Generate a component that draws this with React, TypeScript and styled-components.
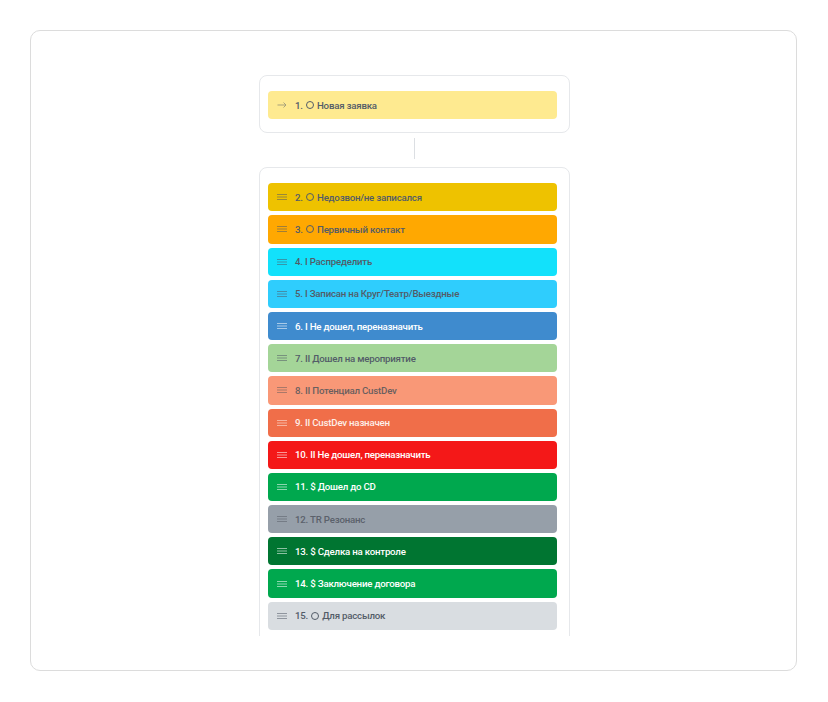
import React from 'react';
import styled, { createGlobalStyle } from 'styled-components';

const GlobalStyle = createGlobalStyle`
  html, body {
    margin: 0;
    padding: 0;
    background: #ffffff;
  }
  body {
    font-family: Roboto, 'Noto Sans', 'DejaVu Sans', sans-serif;
  }
`;

const Page = styled.div`
  box-sizing: border-box;
  width: 100%;
  height: 702px;
  padding: 30px 31px 31px 30px;
`;

const Card = styled.div`
  box-sizing: border-box;
  height: 100%;
  display: flex;
  flex-direction: column;
  padding: 44px 0 34px 0;
  border: 1px solid #dcdcdc;
  border-radius: 10px;
  background: #fff;
`;

const Viewport = styled.div`
  flex: 1;
  overflow: hidden;
  display: flex;
  flex-direction: column;
  align-items: center;
  padding-left: 2px;
`;

const Panel = styled.div`
  box-sizing: border-box;
  width: 311px;
  padding: 15px 12px 13px 8px;
  border: 1px solid #e6e8eb;
  border-radius: 8px;
  background: #fff;
  display: flex;
  flex-direction: column;
  gap: 4px;
  flex-shrink: 0;
`;

const Connector = styled.div`
  width: 1px;
  height: 21px;
  margin: 5px 0 8px;
  background: #dcdfe3;
  flex-shrink: 0;
`;

const Row = styled.div<{ $bg: string; $fg: string }>`
  display: flex;
  align-items: center;
  gap: 8px;
  height: 28.2px;
  padding: 0 9px;
  border-radius: 4px;
  background: ${(p) => p.$bg};
  color: ${(p) => p.$fg};
  font-size: 9.7px;
  font-weight: 500;
  letter-spacing: -0.22px;
  white-space: nowrap;
  flex-shrink: 0;
`;

const Icon = styled.svg`
  width: 10px;
  height: 10px;
  flex-shrink: 0;
  opacity: 0.55;
`;

const Circle = styled.span`
  display: inline-block;
  width: 6px;
  height: 6px;
  border: 1px solid currentColor;
  border-radius: 50%;
  margin: 0 3px 0 1px;
  vertical-align: -0.5px;
`;

const Handle = () => (
  <Icon viewBox="0 0 10 10">
    <path d="M0 2.5h10M0 5h10M0 7.5h10" stroke="currentColor" strokeWidth="1" />
  </Icon>
);

const Arrow = () => (
  <Icon viewBox="0 0 10 10">
    <path d="M0.5 5h8.5M6.5 2.5 9 5 6.5 7.5" stroke="currentColor" strokeWidth="0.9" fill="none" />
  </Icon>
);

const DARK = '#535c68';
const LIGHT = '#ffffff';

type Stage = { n: number; mark: string; title: string; bg: string; fg: string };

const stages: Stage[] = [
  { n: 2, mark: 'o', title: 'Недозвон/не записался', bg: '#eec200', fg: DARK },
  { n: 3, mark: 'o', title: 'Первичный контакт', bg: '#ffa801', fg: DARK },
  { n: 4, mark: 'I', title: 'Распределить', bg: '#12e1fb', fg: DARK },
  { n: 5, mark: 'I', title: 'Записан на Круг/Театр/Выездные', bg: '#2fcdfd', fg: DARK },
  { n: 6, mark: 'I', title: 'Не дошел, переназначить', bg: '#3f8bce', fg: LIGHT },
  { n: 7, mark: 'II', title: 'Дошел на мероприятие', bg: '#a4d598', fg: DARK },
  { n: 8, mark: 'II', title: 'Потенциал CustDev', bg: '#f99877', fg: '#6a5f5f' },
  { n: 9, mark: 'II', title: 'CustDev назначен', bg: '#f06e49', fg: '#fdeee8' },
  { n: 10, mark: 'II', title: 'Не дошел, переназначить', bg: '#f41818', fg: LIGHT },
  { n: 11, mark: '$', title: 'Дошел до CD', bg: '#00a84e', fg: LIGHT },
  { n: 12, mark: 'TR', title: 'Резонанс', bg: '#969fa9', fg: '#5b616b' },
  { n: 13, mark: '$', title: 'Сделка на контроле', bg: '#007531', fg: LIGHT },
  { n: 14, mark: '$', title: 'Заключение договора', bg: '#00a84e', fg: LIGHT },
  { n: 15, mark: 'o', title: 'Для рассылок', bg: '#d9dde1', fg: DARK },
];

const Label = ({ s }: { s: Stage }) => (
  <span>
    {s.n}.{' '}
    {s.mark === 'o' ? <Circle /> : `${s.mark} `}
    {s.title}
  </span>
);

export default function App() {
  return (
    <>
      <GlobalStyle />
      <Page>
        <Card>
          <Viewport>
            <Panel>
              <Row $bg="#feea90" $fg={DARK}>
                <Arrow />
                <span>
                  1. <Circle />
                  Новая заявка
                </span>
              </Row>
            </Panel>
            <Connector />
            <Panel>
              {stages.map((s) => (
                <Row key={s.n} $bg={s.bg} $fg={s.fg}>
                  <Handle />
                  <Label s={s} />
                </Row>
              ))}
            </Panel>
          </Viewport>
        </Card>
      </Page>
    </>
  );
}
